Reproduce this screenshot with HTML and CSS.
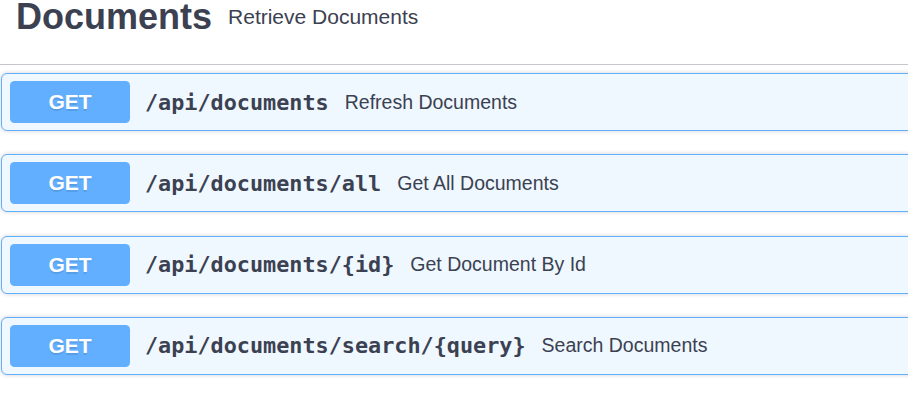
FILE: index.html
```html
<!DOCTYPE html>
<html>
<head>
<meta charset="utf-8">
<link rel="stylesheet" href="styles.css">
</head>
<body>
<div class="section">
  <h3 class="tag">
    <span class="tag-name">Documents</span>
    <small class="tag-desc">Retrieve Documents</small>
  </h3>
  <div class="ops">
    <div class="op">
      <div class="summary">
        <span class="method">GET</span>
        <span class="path">/api/documents</span>
        <span class="desc">Refresh Documents</span>
      </div>
    </div>
    <div class="op">
      <div class="summary">
        <span class="method">GET</span>
        <span class="path">/api/documents/all</span>
        <span class="desc">Get All Documents</span>
      </div>
    </div>
    <div class="op">
      <div class="summary">
        <span class="method">GET</span>
        <span class="path">/api/documents/{id}</span>
        <span class="desc">Get Document By Id</span>
      </div>
    </div>
    <div class="op">
      <div class="summary">
        <span class="method">GET</span>
        <span class="path">/api/documents/search/{query}</span>
        <span class="desc">Search Documents</span>
      </div>
    </div>
  </div>
</div>
</body>
</html>
```

FILE: styles.css
```css
html, body {
  margin: 0;
  padding: 0;
  background: #fff;
}
body {
  font-family: "Liberation Sans", Arial, sans-serif;
  color: #3b4151;
  width: 1100px;
}
.tag {
  display: flex;
  align-items: flex-start;
  margin: 0;
  padding: 0 0 0 16px;
  height: 65px;
  border-bottom: 1px solid #c4c6cb;
  box-sizing: border-box;
}
.tag-name {
  font-size: 36px;
  font-weight: 700;
  line-height: 34px;
  color: #3b4151;
}
.tag-desc {
  font-size: 21px;
  font-weight: 400;
  line-height: 24px;
  padding: 0 15px 0 16px;
  margin-top: 5px;
  color: #3b4151;
}
.ops {
  padding-top: 8px;
}
.op {
  margin: 0 0 23.33px 1px;
  border: 1px solid #61affe;
  border-radius: 6px;
  background: #eff7ff;
  box-shadow: 0 0 4.5px rgba(0, 0, 0, 0.19);
}
.summary {
  display: flex;
  align-items: center;
  padding: 7px 8px;
}
.method {
  display: block;
  width: 120px;
  height: 42px;
  line-height: 42px;
  text-align: center;
  background: #61affe;
  border-radius: 4.5px;
  color: #fff;
  font-size: 21px;
  font-weight: 700;
  text-shadow: 0 1.5px 0 rgba(0, 0, 0, 0.1);
}
.path {
  font-family: "DejaVu Sans Mono", monospace;
  font-weight: 700;
  font-size: 21.8px;
  padding: 0 16px 0 15px;
  color: #3b4151;
}
.desc {
  font-size: 19.5px;
  color: #3b4151;
}
```
